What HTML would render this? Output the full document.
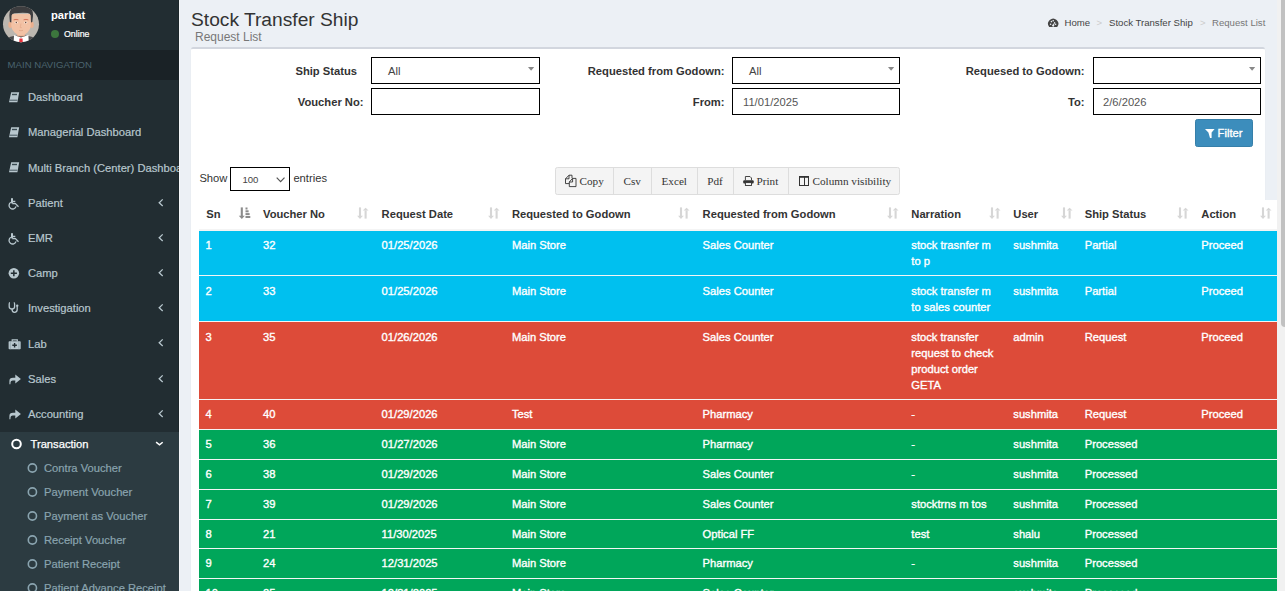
<!DOCTYPE html><html><head><meta charset="utf-8"><title>Stock Transfer Ship</title>
<style>
html,body{margin:0;padding:0}
body{width:1285px;height:591px;overflow:hidden;position:relative;background:#ecf0f5;font-family:"Liberation Sans",sans-serif;}
.t{position:absolute;white-space:nowrap;}
.r{position:absolute;}
svg{position:absolute;overflow:visible}
</style></head><body>
<div class="r" style="left:0px;top:0px;width:179px;height:591px;background:#222d32;"></div>
<div class="r" style="left:178px;top:0px;width:1px;height:591px;background:#1d272b;"></div>
<div class="r" style="left:179px;top:0px;width:1px;height:591px;background:#f4f6f9;"></div>
<svg style="left:0;top:0" width="44" height="48" viewBox="0 0 44 48">
<defs><clipPath id="av"><circle cx="21" cy="24.2" r="18"/></clipPath></defs>
<circle cx="21" cy="24.2" r="18" fill="#bcb7b0"/>
<g clip-path="url(#av)">
<path d="M5 48 L7.5 38 Q13 35.2 21 35.2 Q29 35.2 34.5 38 L37 48 Z" fill="#4a4a4c"/>
<path d="M14 35 L21 37.5 L28.4 35 L28.8 43 L13.6 43 Z" fill="#ffffff"/>
<path d="M19.5 38.6 L22.5 38.6 L22.8 43 L19.2 43 Z" fill="#e8323c"/>
<rect x="17.2" y="30" width="7.6" height="6.4" fill="#e9ae90"/>
<ellipse cx="10.3" cy="24.8" rx="2" ry="3.3" fill="#eab08f"/>
<ellipse cx="31.7" cy="24.8" rx="2" ry="3.3" fill="#eab08f"/>
<path d="M11.3 14 L30.7 14 L30.7 26 Q30.7 29.5 27.5 32.5 Q24.5 35.6 21 35.6 Q17.5 35.6 14.5 32.5 Q11.3 29.5 11.3 26 Z" fill="#f2c2a5"/>
<path d="M9.9 22 L9.4 16 Q9 8.5 15 6.5 Q21 4.5 27.5 6.3 Q33.5 8.5 33 16 L32.3 22 L31 22.5 L30.8 15.5 Q30 13.2 27.8 13 Q22 12.6 14.4 13.2 Q12 13.4 11.5 15.5 L11.3 22.5 Z" fill="#3d3d3f"/>
<path d="M13.6 19.9 Q16 18.9 18.4 19.8" stroke="#d8745a" stroke-width="1" fill="none"/>
<path d="M23.6 19.8 Q26 18.9 28.4 19.9" stroke="#d8745a" stroke-width="1" fill="none"/>
<ellipse cx="16.2" cy="22.5" rx="1.6" ry="0.85" fill="#fff"/><circle cx="16.3" cy="22.5" r="0.8" fill="#6a4a3a"/>
<ellipse cx="25.8" cy="22.5" rx="1.6" ry="0.85" fill="#fff"/><circle cx="25.7" cy="22.5" r="0.8" fill="#6a4a3a"/>
<path d="M21 23.5 L20.2 27.6 L21.8 27.6" stroke="#e2a486" stroke-width="0.6" fill="none"/>
<path d="M19 30.4 Q21 31 23 30.4" stroke="#d99a7e" stroke-width="0.6" fill="none"/>
</g></svg>
<div class="t" style="left:51px;top:8.00px;font-size:11.2px;line-height:14px;color:#fff;font-weight:bold;">parbat</div>
<div class="r" style="left:50.8px;top:29.8px;width:8.3px;height:8.3px;border-radius:50%;background:#3c763d"></div>
<div class="t" style="left:64px;top:28.50px;font-size:8.8px;line-height:11px;color:#fff;-webkit-text-stroke:0.2px #fff">Online</div>
<div class="r" style="left:0px;top:50px;width:179px;height:30px;background:#1a2226;"></div>
<div class="t" style="left:7.6px;top:58.60px;font-size:9.6px;line-height:12px;color:#4b646f;">MAIN NAVIGATION</div>
<div style="position:absolute;left:0;top:0;width:179px;height:591px;overflow:hidden">
<svg style="left:0;top:91.9px" width="30" height="20" viewBox="0 0 30 20"><path d="M11.2 0.2 L19.2 0.2 L17.4 10.2 L9 10.2 Z" fill="#b8c7ce"/><rect x="12" y="1.8" width="5" height="1.4" fill="#3a4a52"/><path d="M9.6 8.2 L17.4 8.2" stroke="#3a4a52" stroke-width="0.9"/></svg>
<div class="t" style="left:28px;top:90.10px;font-size:11.2px;line-height:14px;color:#b8c7ce;-webkit-text-stroke:0.2px #b8c7ce">Dashboard</div>
<svg style="left:0;top:127.10000000000001px" width="30" height="20" viewBox="0 0 30 20"><path d="M11.2 0.2 L19.2 0.2 L17.4 10.2 L9 10.2 Z" fill="#b8c7ce"/><rect x="12" y="1.8" width="5" height="1.4" fill="#3a4a52"/><path d="M9.6 8.2 L17.4 8.2" stroke="#3a4a52" stroke-width="0.9"/></svg>
<div class="t" style="left:28px;top:125.30px;font-size:11.2px;line-height:14px;color:#b8c7ce;-webkit-text-stroke:0.2px #b8c7ce">Managerial Dashboard</div>
<svg style="left:0;top:162.3px" width="30" height="20" viewBox="0 0 30 20"><path d="M11.2 0.2 L19.2 0.2 L17.4 10.2 L9 10.2 Z" fill="#b8c7ce"/><rect x="12" y="1.8" width="5" height="1.4" fill="#3a4a52"/><path d="M9.6 8.2 L17.4 8.2" stroke="#3a4a52" stroke-width="0.9"/></svg>
<div class="t" style="left:28px;top:160.50px;font-size:11.2px;line-height:14px;color:#b8c7ce;-webkit-text-stroke:0.2px #b8c7ce">Multi Branch (Center) Dashboard</div>
<svg style="left:0;top:197.70000000000002px" width="30" height="20" viewBox="0 0 30 20"><rect x="11" y="0" width="2" height="5.5" rx="0.8" fill="#b8c7ce"/><path d="M12 3.5 L15.3 3.5 M12.3 5.6 L15.4 5.6 L18.5 8.8" stroke="#b8c7ce" stroke-width="1.3" fill="none"/><path d="M10.8 4.3 A3.6 3.6 0 1 0 16.1 8.4" stroke="#b8c7ce" stroke-width="1.3" fill="none"/></svg>
<div class="t" style="left:28px;top:195.70px;font-size:11.2px;line-height:14px;color:#b8c7ce;-webkit-text-stroke:0.2px #b8c7ce">Patient</div>
<svg style="left:0;top:198.50000000000003px" width="179" height="20" viewBox="0 0 179 20"><path d="M162.7 0.4 L159.2 3.7 L162.7 6.9" stroke="#b8c7ce" stroke-width="1.3" fill="none"/></svg>
<svg style="left:0;top:232.9px" width="30" height="20" viewBox="0 0 30 20"><rect x="11" y="0" width="2" height="5.5" rx="0.8" fill="#b8c7ce"/><path d="M12 3.5 L15.3 3.5 M12.3 5.6 L15.4 5.6 L18.5 8.8" stroke="#b8c7ce" stroke-width="1.3" fill="none"/><path d="M10.8 4.3 A3.6 3.6 0 1 0 16.1 8.4" stroke="#b8c7ce" stroke-width="1.3" fill="none"/></svg>
<div class="t" style="left:28px;top:230.90px;font-size:11.2px;line-height:14px;color:#b8c7ce;-webkit-text-stroke:0.2px #b8c7ce">EMR</div>
<svg style="left:0;top:233.70000000000002px" width="179" height="20" viewBox="0 0 179 20"><path d="M162.7 0.4 L159.2 3.7 L162.7 6.9" stroke="#b8c7ce" stroke-width="1.3" fill="none"/></svg>
<svg style="left:0;top:267.7px" width="30" height="20" viewBox="0 0 30 20"><circle cx="13.85" cy="5.25" r="5.25" fill="#b8c7ce"/><path d="M13.85 2.2 V8.3 M10.8 5.25 H16.9" stroke="#222d32" stroke-width="1.5"/></svg>
<div class="t" style="left:28px;top:266.10px;font-size:11.2px;line-height:14px;color:#b8c7ce;-webkit-text-stroke:0.2px #b8c7ce">Camp</div>
<svg style="left:0;top:268.9px" width="179" height="20" viewBox="0 0 179 20"><path d="M162.7 0.4 L159.2 3.7 L162.7 6.9" stroke="#b8c7ce" stroke-width="1.3" fill="none"/></svg>
<svg style="left:0;top:302.30000000000007px" width="30" height="20" viewBox="0 0 30 20"><path d="M10 0.6 Q9.2 0.6 9.2 2 L9.2 4.5 Q9.2 7 12 7 Q14.6 7 14.6 4.5 L14.6 2 Q14.6 0.6 13.8 0.6" stroke="#b8c7ce" stroke-width="1.3" fill="none"/><path d="M12 7 Q12 10.3 14.5 10.3 Q17.2 10.3 17.2 7.5 L17.2 4.5" stroke="#b8c7ce" stroke-width="1.3" fill="none"/><circle cx="17.2" cy="3.8" r="1.2" fill="#b8c7ce"/></svg>
<div class="t" style="left:28px;top:301.30px;font-size:11.2px;line-height:14px;color:#b8c7ce;-webkit-text-stroke:0.2px #b8c7ce">Investigation</div>
<svg style="left:0;top:304.1px" width="179" height="20" viewBox="0 0 179 20"><path d="M162.7 0.4 L159.2 3.7 L162.7 6.9" stroke="#b8c7ce" stroke-width="1.3" fill="none"/></svg>
<svg style="left:0;top:338.70000000000005px" width="30" height="20" viewBox="0 0 30 20"><path d="M12.2 2.6 V0.8 H17.3 V2.6" stroke="#b8c7ce" stroke-width="1.2" fill="none"/><rect x="8.6" y="2.3" width="12.1" height="8" rx="0.8" fill="#b8c7ce"/><path d="M14.6 4 V8.6 M12.3 6.3 H16.9" stroke="#222d32" stroke-width="1.4"/><path d="M10.4 2.3 V10.3 M18.9 2.3 V10.3" stroke="#8a9aa2" stroke-width="0.6"/></svg>
<div class="t" style="left:28px;top:336.50px;font-size:11.2px;line-height:14px;color:#b8c7ce;-webkit-text-stroke:0.2px #b8c7ce">Lab</div>
<svg style="left:0;top:339.3px" width="179" height="20" viewBox="0 0 179 20"><path d="M162.7 0.4 L159.2 3.7 L162.7 6.9" stroke="#b8c7ce" stroke-width="1.3" fill="none"/></svg>
<svg style="left:0;top:373.70000000000005px" width="30" height="20" viewBox="0 0 30 20"><path d="M9.4 10.3 L9.4 7 Q9.4 3.7 13 3.7 L15.3 3.7 L15.3 0.6 L20.9 5.1 L15.3 9.6 L15.3 6.4 L12.8 6.4 Q10.7 6.4 10.6 8 L10.4 10.3 Z" fill="#b8c7ce"/></svg>
<div class="t" style="left:28px;top:371.70px;font-size:11.2px;line-height:14px;color:#b8c7ce;-webkit-text-stroke:0.2px #b8c7ce">Sales</div>
<svg style="left:0;top:374.5px" width="179" height="20" viewBox="0 0 179 20"><path d="M162.7 0.4 L159.2 3.7 L162.7 6.9" stroke="#b8c7ce" stroke-width="1.3" fill="none"/></svg>
<svg style="left:0;top:408.90000000000003px" width="30" height="20" viewBox="0 0 30 20"><path d="M9.4 10.3 L9.4 7 Q9.4 3.7 13 3.7 L15.3 3.7 L15.3 0.6 L20.9 5.1 L15.3 9.6 L15.3 6.4 L12.8 6.4 Q10.7 6.4 10.6 8 L10.4 10.3 Z" fill="#b8c7ce"/></svg>
<div class="t" style="left:28px;top:406.90px;font-size:11.2px;line-height:14px;color:#b8c7ce;-webkit-text-stroke:0.2px #b8c7ce">Accounting</div>
<svg style="left:0;top:409.7px" width="179" height="20" viewBox="0 0 179 20"><path d="M162.7 0.4 L159.2 3.7 L162.7 6.9" stroke="#b8c7ce" stroke-width="1.3" fill="none"/></svg>
</div>
<div class="r" style="left:0px;top:432px;width:179px;height:159px;background:#2c3b41;"></div>
<svg style="left:0;top:432px" width="179" height="30" viewBox="0 0 179 30"><circle cx="16.5" cy="12" r="4.3" stroke="#fff" stroke-width="2" fill="none"/><path d="M156.1 10.2 L159.5 12.9 L162.7 10.2" stroke="#fff" stroke-width="1.5" fill="none"/></svg>
<div class="t" style="left:30.5px;top:436.80px;font-size:11.2px;line-height:14px;color:#fff;-webkit-text-stroke:0.25px #fff">Transaction</div>
<svg style="left:0;top:456px" width="60" height="24" viewBox="0 0 60 24"><circle cx="32.4" cy="12" r="4.1" stroke="#8aa4af" stroke-width="1.6" fill="none"/></svg>
<div class="t" style="left:44px;top:460.80px;font-size:11.2px;line-height:14px;color:#8aa4af;-webkit-text-stroke:0.2px #8aa4af">Contra Voucher</div>
<svg style="left:0;top:480px" width="60" height="24" viewBox="0 0 60 24"><circle cx="32.4" cy="12" r="4.1" stroke="#8aa4af" stroke-width="1.6" fill="none"/></svg>
<div class="t" style="left:44px;top:484.80px;font-size:11.2px;line-height:14px;color:#8aa4af;-webkit-text-stroke:0.2px #8aa4af">Payment Voucher</div>
<svg style="left:0;top:504px" width="60" height="24" viewBox="0 0 60 24"><circle cx="32.4" cy="12" r="4.1" stroke="#8aa4af" stroke-width="1.6" fill="none"/></svg>
<div class="t" style="left:44px;top:508.80px;font-size:11.2px;line-height:14px;color:#8aa4af;-webkit-text-stroke:0.2px #8aa4af">Payment as Voucher</div>
<svg style="left:0;top:528px" width="60" height="24" viewBox="0 0 60 24"><circle cx="32.4" cy="12" r="4.1" stroke="#8aa4af" stroke-width="1.6" fill="none"/></svg>
<div class="t" style="left:44px;top:532.80px;font-size:11.2px;line-height:14px;color:#8aa4af;-webkit-text-stroke:0.2px #8aa4af">Receipt Voucher</div>
<svg style="left:0;top:552px" width="60" height="24" viewBox="0 0 60 24"><circle cx="32.4" cy="12" r="4.1" stroke="#8aa4af" stroke-width="1.6" fill="none"/></svg>
<div class="t" style="left:44px;top:556.80px;font-size:11.2px;line-height:14px;color:#8aa4af;-webkit-text-stroke:0.2px #8aa4af">Patient Receipt</div>
<svg style="left:0;top:576px" width="60" height="24" viewBox="0 0 60 24"><circle cx="32.4" cy="12" r="4.1" stroke="#8aa4af" stroke-width="1.6" fill="none"/></svg>
<div class="t" style="left:44px;top:580.80px;font-size:11.2px;line-height:14px;color:#8aa4af;-webkit-text-stroke:0.2px #8aa4af">Patient Advance Receipt</div>
<div class="t" style="left:191px;top:8.30px;font-size:19.2px;line-height:24px;color:#333;">Stock Transfer Ship</div>
<div class="t" style="left:195px;top:29.50px;font-size:12px;line-height:15px;color:#777;">Request List</div>
<svg style="left:1047.6px;top:18.8px" width="11" height="9" viewBox="0 0 11 9"><path d="M1.2 7.9 A5.1 5.1 0 1 1 9.2 7.9 Z" fill="#444"/><circle cx="2.6" cy="5.2" r="0.8" fill="#ecf0f5"/><circle cx="3.4" cy="2.6" r="0.8" fill="#ecf0f5"/><circle cx="5.2" cy="1.7" r="0.8" fill="#ecf0f5"/><circle cx="7.6" cy="5.2" r="0.8" fill="#ecf0f5"/><path d="M5.2 6.6 L6.9 3" stroke="#ecf0f5" stroke-width="1"/><circle cx="5.2" cy="6.6" r="1.1" fill="#ecf0f5"/></svg>
<div class="t" style="left:1064.5px;top:16.50px;font-size:9.6px;line-height:12px;color:#444;">Home</div>
<div class="t" style="left:1096.5px;top:16.50px;font-size:9.6px;line-height:12px;color:#ccc;">&gt;</div>
<div class="t" style="left:1109px;top:16.50px;font-size:9.6px;line-height:12px;color:#444;">Stock Transfer Ship</div>
<div class="t" style="left:1200px;top:16.50px;font-size:9.6px;line-height:12px;color:#ccc;">&gt;</div>
<div class="t" style="left:1212px;top:16.50px;font-size:9.6px;line-height:12px;color:#777;">Request List</div>
<div class="r" style="left:191px;top:47px;width:1074px;height:560px;background:#fff;border-top:2.4px solid #d2d6de;box-sizing:border-box;box-shadow:0 1px 1px rgba(0,0,0,.1);border-radius:2.4px"></div>
<div class="t" style="right:928px;top:64.00px;font-size:11.2px;line-height:14px;color:#333;text-align:right;font-weight:bold;">Ship Status</div>
<div class="r" style="left:371px;top:57px;width:169px;height:27px;background:#fff;border:1px solid #000;box-sizing:border-box"></div>
<svg style="left:527.9px;top:67px" width="8" height="5" viewBox="0 0 8 5"><path d="M0 0 L6.2 0 L3.1 3.7 Z" fill="#888"/></svg>
<div class="t" style="left:388px;top:63.90px;font-size:11.2px;line-height:14px;color:#444;">All</div>
<div class="t" style="right:560.5px;top:64.00px;font-size:11.2px;line-height:14px;color:#333;text-align:right;font-weight:bold;">Requested from Godown:</div>
<div class="r" style="left:732px;top:57px;width:168px;height:27px;background:#fff;border:1px solid #000;box-sizing:border-box"></div>
<svg style="left:888.2px;top:67px" width="8" height="5" viewBox="0 0 8 5"><path d="M0 0 L6.2 0 L3.1 3.7 Z" fill="#888"/></svg>
<div class="t" style="left:749px;top:63.90px;font-size:11.2px;line-height:14px;color:#444;">All</div>
<div class="t" style="right:200.5px;top:64.00px;font-size:11.2px;line-height:14px;color:#333;text-align:right;font-weight:bold;">Requesed to Godown:</div>
<div class="r" style="left:1093px;top:57px;width:168px;height:27px;background:#fff;border:1px solid #000;box-sizing:border-box"></div>
<svg style="left:1249.1px;top:67px" width="8" height="5" viewBox="0 0 8 5"><path d="M0 0 L6.2 0 L3.1 3.7 Z" fill="#888"/></svg>
<div class="t" style="right:921.5px;top:95.20px;font-size:11.2px;line-height:14px;color:#333;text-align:right;font-weight:bold;">Voucher No:</div>
<div class="r" style="left:371px;top:88px;width:169px;height:27px;background:#fff;border:1px solid #000;box-sizing:border-box"></div>
<div class="t" style="right:560.5px;top:95.20px;font-size:11.2px;line-height:14px;color:#333;text-align:right;font-weight:bold;">From:</div>
<div class="r" style="left:732px;top:88px;width:168px;height:27px;background:#fff;border:1px solid #000;box-sizing:border-box"></div>
<div class="t" style="left:743px;top:95.20px;font-size:11.2px;line-height:14px;color:#555;">11/01/2025</div>
<div class="t" style="right:200.5px;top:95.20px;font-size:11.2px;line-height:14px;color:#333;text-align:right;font-weight:bold;">To:</div>
<div class="r" style="left:1093px;top:88px;width:168px;height:27px;background:#fff;border:1px solid #000;box-sizing:border-box"></div>
<div class="t" style="left:1103px;top:95.20px;font-size:11.2px;line-height:14px;color:#555;">2/6/2026</div>
<div class="r" style="left:1195px;top:119px;width:58px;height:27.8px;background:#3c8dbc;border:1px solid #367fa9;box-sizing:border-box;border-radius:2.4px"></div>
<svg style="left:1205px;top:128.8px" width="10" height="10" viewBox="0 0 10 10"><path d="M0 0.1 L9.6 0.1 L6.6 3.6 L6.6 9 L5 9 L3.4 3.6 Z" fill="#fff"/></svg>
<div class="t" style="left:1217.6px;top:126.30px;font-size:11.2px;line-height:14px;color:#fff;-webkit-text-stroke:0.35px #fff">Filter</div>
<div class="t" style="left:199.4px;top:170.80px;font-size:11.2px;line-height:14px;color:#333;">Show</div>
<div class="r" style="left:230px;top:167px;width:60px;height:24px;background:#fff;border:1px solid #000;box-sizing:border-box"></div>
<div class="t" style="left:242.4px;top:174.00px;font-size:9.6px;line-height:12px;color:#444;">100</div>
<svg style="left:276px;top:176.5px" width="10" height="6" viewBox="0 0 10 6"><path d="M0.7 0.6 L4.6 4.6 L8.5 0.6" stroke="#555" stroke-width="1.2" fill="none"/></svg>
<div class="t" style="left:293.4px;top:170.80px;font-size:11.2px;line-height:14px;color:#333;">entries</div>
<div class="r" style="left:555.3px;top:167.4px;width:345.2px;height:27.4px;background:#f4f4f4;border:1px solid #ddd;box-sizing:border-box;border-radius:2.4px"></div>
<div class="r" style="left:613px;top:168px;width:1px;height:26px;background:#ddd;"></div>
<div class="r" style="left:651px;top:168px;width:1px;height:26px;background:#ddd;"></div>
<div class="r" style="left:697px;top:168px;width:1px;height:26px;background:#ddd;"></div>
<div class="r" style="left:733px;top:168px;width:1px;height:26px;background:#ddd;"></div>
<div class="r" style="left:788px;top:168px;width:1px;height:26px;background:#ddd;"></div>
<svg style="left:565px;top:174px" width="12" height="14" viewBox="0 0 12 14"><path d="M7 4.3 L7 1.2 L4 1.2 L0.5 4.8 L0.5 9.6 L4.3 9.6 M0.5 4.8 L4 4.8 L4 1.2" stroke="#333" stroke-width="0.9" fill="none"/><path d="M4.3 8 L7.6 4.4 L11 4.4 L11 12.6 L4.3 12.6 Z" stroke="#333" stroke-width="0.9" fill="#f4f4f4"/><path d="M4.3 8 L7.6 8 L7.6 4.4" stroke="#333" stroke-width="0.9" fill="none"/></svg>
<div class="t" style="left:579.5px;top:174.20px;font-size:11.2px;line-height:14px;color:#333;font-family:'Liberation Serif',serif;">Copy</div>
<div class="t" style="left:623.5px;top:174.20px;font-size:11.2px;line-height:14px;color:#333;font-family:'Liberation Serif',serif;">Csv</div>
<div class="t" style="left:661.5px;top:174.20px;font-size:11.2px;line-height:14px;color:#333;font-family:'Liberation Serif',serif;">Excel</div>
<div class="t" style="left:707.3px;top:174.20px;font-size:11.2px;line-height:14px;color:#333;font-family:'Liberation Serif',serif;">Pdf</div>
<svg style="left:743px;top:176px" width="11" height="10" viewBox="0 0 11 10"><path d="M2.4 4.3 V0.5 H7 L8.5 2 V4.3" fill="#f4f4f4" stroke="#333" stroke-width="0.9"/><rect x="0.2" y="4.2" width="10.5" height="3.2" rx="1" fill="#333"/><rect x="2.4" y="6.6" width="6.1" height="2.9" fill="#f4f4f4" stroke="#333" stroke-width="0.9"/></svg>
<div class="t" style="left:756.5px;top:174.20px;font-size:11.2px;line-height:14px;color:#333;font-family:'Liberation Serif',serif;">Print</div>
<svg style="left:799px;top:176px" width="11" height="10" viewBox="0 0 11 10"><rect x="0.5" y="0.5" width="9" height="9" fill="none" stroke="#333" stroke-width="1"/><rect x="0" y="0" width="10" height="1.8" fill="#333"/><path d="M5.5 0.6 V9.4" stroke="#333" stroke-width="1"/></svg>
<div class="t" style="left:812.5px;top:174.20px;font-size:11.2px;line-height:14px;color:#333;font-family:'Liberation Serif',serif;">Column visibility</div>
<div class="r" style="left:199px;top:200px;width:1078px;height:31px;background:#fff;"></div>
<div class="r" style="left:199px;top:229px;width:1078px;height:1.6px;background:#f4f4f4;"></div>
<div class="t" style="left:206.20000000000002px;top:207.40px;font-size:11.2px;line-height:14px;color:#333;font-weight:bold;">Sn</div>
<svg style="left:238.8px;top:206px" width="13" height="14" viewBox="0 0 13 14"><path d="M2.8 1.4 L2.8 10.5" stroke="#8c8c8c" stroke-width="2.1"/><path d="M-0.2 9.8 L5.8 9.8 L2.8 12.9 Z" fill="#8c8c8c"/><rect x="6.5" y="1.5" width="2" height="2" fill="#8c8c8c"/><rect x="6.5" y="4.3" width="3.1" height="2" fill="#8c8c8c"/><rect x="6.5" y="7.1" width="4.1" height="2" fill="#8c8c8c"/><rect x="6.5" y="10" width="4.8" height="2" fill="#8c8c8c"/></svg>
<div class="t" style="left:263.0px;top:207.40px;font-size:11.2px;line-height:14px;color:#333;font-weight:bold;">Voucher No</div>
<svg style="left:357.4px;top:206px" width="13" height="14" viewBox="0 0 13 14"><path d="M3 1.4 L3 10.5" stroke="#d6d6d6" stroke-width="2.1"/><path d="M0.1 9.8 L5.9 9.8 L3 12.9 Z" fill="#d6d6d6"/><path d="M8.6 4.4 L8.6 12.6" stroke="#d6d6d6" stroke-width="2.1"/><path d="M5.7 4.6 L11.5 4.6 L8.6 1.7 Z" fill="#d6d6d6"/></svg>
<div class="t" style="left:381.59999999999997px;top:207.40px;font-size:11.2px;line-height:14px;color:#333;font-weight:bold;">Request Date</div>
<svg style="left:487.7px;top:206px" width="13" height="14" viewBox="0 0 13 14"><path d="M3 1.4 L3 10.5" stroke="#d6d6d6" stroke-width="2.1"/><path d="M0.1 9.8 L5.9 9.8 L3 12.9 Z" fill="#d6d6d6"/><path d="M8.6 4.4 L8.6 12.6" stroke="#d6d6d6" stroke-width="2.1"/><path d="M5.7 4.6 L11.5 4.6 L8.6 1.7 Z" fill="#d6d6d6"/></svg>
<div class="t" style="left:511.9px;top:207.40px;font-size:11.2px;line-height:14px;color:#333;font-weight:bold;">Requested to Godown</div>
<svg style="left:678.4000000000001px;top:206px" width="13" height="14" viewBox="0 0 13 14"><path d="M3 1.4 L3 10.5" stroke="#d6d6d6" stroke-width="2.1"/><path d="M0.1 9.8 L5.9 9.8 L3 12.9 Z" fill="#d6d6d6"/><path d="M8.6 4.4 L8.6 12.6" stroke="#d6d6d6" stroke-width="2.1"/><path d="M5.7 4.6 L11.5 4.6 L8.6 1.7 Z" fill="#d6d6d6"/></svg>
<div class="t" style="left:702.6px;top:207.40px;font-size:11.2px;line-height:14px;color:#333;font-weight:bold;">Requested from Godown</div>
<svg style="left:887.1px;top:206px" width="13" height="14" viewBox="0 0 13 14"><path d="M3 1.4 L3 10.5" stroke="#d6d6d6" stroke-width="2.1"/><path d="M0.1 9.8 L5.9 9.8 L3 12.9 Z" fill="#d6d6d6"/><path d="M8.6 4.4 L8.6 12.6" stroke="#d6d6d6" stroke-width="2.1"/><path d="M5.7 4.6 L11.5 4.6 L8.6 1.7 Z" fill="#d6d6d6"/></svg>
<div class="t" style="left:911.3px;top:207.40px;font-size:11.2px;line-height:14px;color:#333;font-weight:bold;">Narration</div>
<svg style="left:989.1px;top:206px" width="13" height="14" viewBox="0 0 13 14"><path d="M3 1.4 L3 10.5" stroke="#d6d6d6" stroke-width="2.1"/><path d="M0.1 9.8 L5.9 9.8 L3 12.9 Z" fill="#d6d6d6"/><path d="M8.6 4.4 L8.6 12.6" stroke="#d6d6d6" stroke-width="2.1"/><path d="M5.7 4.6 L11.5 4.6 L8.6 1.7 Z" fill="#d6d6d6"/></svg>
<div class="t" style="left:1013.3px;top:207.40px;font-size:11.2px;line-height:14px;color:#333;font-weight:bold;">User</div>
<svg style="left:1060.5px;top:206px" width="13" height="14" viewBox="0 0 13 14"><path d="M3 1.4 L3 10.5" stroke="#d6d6d6" stroke-width="2.1"/><path d="M0.1 9.8 L5.9 9.8 L3 12.9 Z" fill="#d6d6d6"/><path d="M8.6 4.4 L8.6 12.6" stroke="#d6d6d6" stroke-width="2.1"/><path d="M5.7 4.6 L11.5 4.6 L8.6 1.7 Z" fill="#d6d6d6"/></svg>
<div class="t" style="left:1084.7px;top:207.40px;font-size:11.2px;line-height:14px;color:#333;font-weight:bold;">Ship Status</div>
<svg style="left:1177.1000000000001px;top:206px" width="13" height="14" viewBox="0 0 13 14"><path d="M3 1.4 L3 10.5" stroke="#d6d6d6" stroke-width="2.1"/><path d="M0.1 9.8 L5.9 9.8 L3 12.9 Z" fill="#d6d6d6"/><path d="M8.6 4.4 L8.6 12.6" stroke="#d6d6d6" stroke-width="2.1"/><path d="M5.7 4.6 L11.5 4.6 L8.6 1.7 Z" fill="#d6d6d6"/></svg>
<div class="t" style="left:1201.3000000000002px;top:207.40px;font-size:11.2px;line-height:14px;color:#333;font-weight:bold;">Action</div>
<svg style="left:1260.0px;top:206px" width="13" height="14" viewBox="0 0 13 14"><path d="M3 1.4 L3 10.5" stroke="#d6d6d6" stroke-width="2.1"/><path d="M0.1 9.8 L5.9 9.8 L3 12.9 Z" fill="#d6d6d6"/><path d="M8.6 4.4 L8.6 12.6" stroke="#d6d6d6" stroke-width="2.1"/><path d="M5.7 4.6 L11.5 4.6 L8.6 1.7 Z" fill="#d6d6d6"/></svg>
<div class="r" style="left:199px;top:231px;width:1078px;height:44px;background:#00c0ef;"></div>
<div class="t" style="left:205.60000000000002px;top:238.30px;font-size:11.2px;line-height:14px;color:#fff;-webkit-text-stroke:0.35px #fff">1</div>
<div class="t" style="left:263.0px;top:238.30px;font-size:11.2px;line-height:14px;color:#fff;-webkit-text-stroke:0.35px #fff">32</div>
<div class="t" style="left:381.59999999999997px;top:238.30px;font-size:11.2px;line-height:14px;color:#fff;-webkit-text-stroke:0.35px #fff">01/25/2026</div>
<div class="t" style="left:511.9px;top:238.30px;font-size:11.2px;line-height:14px;color:#fff;-webkit-text-stroke:0.35px #fff">Main Store</div>
<div class="t" style="left:702.6px;top:238.30px;font-size:11.2px;line-height:14px;color:#fff;-webkit-text-stroke:0.35px #fff">Sales Counter</div>
<div class="t" style="left:911.3px;top:238.30px;font-size:11.2px;line-height:14px;color:#fff;-webkit-text-stroke:0.35px #fff">stock trasnfer m</div>
<div class="t" style="left:911.3px;top:254.30px;font-size:11.2px;line-height:14px;color:#fff;-webkit-text-stroke:0.35px #fff">to p</div>
<div class="t" style="left:1013.3px;top:238.30px;font-size:11.2px;line-height:14px;color:#fff;-webkit-text-stroke:0.35px #fff">sushmita</div>
<div class="t" style="left:1084.7px;top:238.30px;font-size:11.2px;line-height:14px;color:#fff;-webkit-text-stroke:0.35px #fff">Partial</div>
<div class="t" style="left:1201.3000000000002px;top:238.30px;font-size:11.2px;line-height:14px;color:#fff;-webkit-text-stroke:0.35px #fff">Proceed</div>
<div class="r" style="left:199px;top:275px;width:1078px;height:1px;background:#f4f4f4;"></div>
<div class="r" style="left:199px;top:276px;width:1078px;height:45px;background:#00c0ef;"></div>
<div class="t" style="left:205.60000000000002px;top:284.30px;font-size:11.2px;line-height:14px;color:#fff;-webkit-text-stroke:0.35px #fff">2</div>
<div class="t" style="left:263.0px;top:284.30px;font-size:11.2px;line-height:14px;color:#fff;-webkit-text-stroke:0.35px #fff">33</div>
<div class="t" style="left:381.59999999999997px;top:284.30px;font-size:11.2px;line-height:14px;color:#fff;-webkit-text-stroke:0.35px #fff">01/25/2026</div>
<div class="t" style="left:511.9px;top:284.30px;font-size:11.2px;line-height:14px;color:#fff;-webkit-text-stroke:0.35px #fff">Main Store</div>
<div class="t" style="left:702.6px;top:284.30px;font-size:11.2px;line-height:14px;color:#fff;-webkit-text-stroke:0.35px #fff">Sales Counter</div>
<div class="t" style="left:911.3px;top:284.30px;font-size:11.2px;line-height:14px;color:#fff;-webkit-text-stroke:0.35px #fff">stock transfer m</div>
<div class="t" style="left:911.3px;top:300.30px;font-size:11.2px;line-height:14px;color:#fff;-webkit-text-stroke:0.35px #fff">to sales counter</div>
<div class="t" style="left:1013.3px;top:284.30px;font-size:11.2px;line-height:14px;color:#fff;-webkit-text-stroke:0.35px #fff">sushmita</div>
<div class="t" style="left:1084.7px;top:284.30px;font-size:11.2px;line-height:14px;color:#fff;-webkit-text-stroke:0.35px #fff">Partial</div>
<div class="t" style="left:1201.3000000000002px;top:284.30px;font-size:11.2px;line-height:14px;color:#fff;-webkit-text-stroke:0.35px #fff">Proceed</div>
<div class="r" style="left:199px;top:321px;width:1078px;height:1px;background:#f4f4f4;"></div>
<div class="r" style="left:199px;top:322px;width:1078px;height:77px;background:#dd4b39;"></div>
<div class="t" style="left:205.60000000000002px;top:330.30px;font-size:11.2px;line-height:14px;color:#fff;-webkit-text-stroke:0.35px #fff">3</div>
<div class="t" style="left:263.0px;top:330.30px;font-size:11.2px;line-height:14px;color:#fff;-webkit-text-stroke:0.35px #fff">35</div>
<div class="t" style="left:381.59999999999997px;top:330.30px;font-size:11.2px;line-height:14px;color:#fff;-webkit-text-stroke:0.35px #fff">01/26/2026</div>
<div class="t" style="left:511.9px;top:330.30px;font-size:11.2px;line-height:14px;color:#fff;-webkit-text-stroke:0.35px #fff">Main Store</div>
<div class="t" style="left:702.6px;top:330.30px;font-size:11.2px;line-height:14px;color:#fff;-webkit-text-stroke:0.35px #fff">Sales Counter</div>
<div class="t" style="left:911.3px;top:330.30px;font-size:11.2px;line-height:14px;color:#fff;-webkit-text-stroke:0.35px #fff">stock transfer</div>
<div class="t" style="left:911.3px;top:346.30px;font-size:11.2px;line-height:14px;color:#fff;-webkit-text-stroke:0.35px #fff">request to check</div>
<div class="t" style="left:911.3px;top:362.30px;font-size:11.2px;line-height:14px;color:#fff;-webkit-text-stroke:0.35px #fff">product order</div>
<div class="t" style="left:911.3px;top:378.30px;font-size:11.2px;line-height:14px;color:#fff;-webkit-text-stroke:0.35px #fff">GETA</div>
<div class="t" style="left:1013.3px;top:330.30px;font-size:11.2px;line-height:14px;color:#fff;-webkit-text-stroke:0.35px #fff">admin</div>
<div class="t" style="left:1084.7px;top:330.30px;font-size:11.2px;line-height:14px;color:#fff;-webkit-text-stroke:0.35px #fff">Request</div>
<div class="t" style="left:1201.3000000000002px;top:330.30px;font-size:11.2px;line-height:14px;color:#fff;-webkit-text-stroke:0.35px #fff">Proceed</div>
<div class="r" style="left:199px;top:399px;width:1078px;height:1px;background:#f4f4f4;"></div>
<div class="r" style="left:199px;top:400px;width:1078px;height:29px;background:#dd4b39;"></div>
<div class="t" style="left:205.60000000000002px;top:407.30px;font-size:11.2px;line-height:14px;color:#fff;-webkit-text-stroke:0.35px #fff">4</div>
<div class="t" style="left:263.0px;top:407.30px;font-size:11.2px;line-height:14px;color:#fff;-webkit-text-stroke:0.35px #fff">40</div>
<div class="t" style="left:381.59999999999997px;top:407.30px;font-size:11.2px;line-height:14px;color:#fff;-webkit-text-stroke:0.35px #fff">01/29/2026</div>
<div class="t" style="left:511.9px;top:407.30px;font-size:11.2px;line-height:14px;color:#fff;-webkit-text-stroke:0.35px #fff">Test</div>
<div class="t" style="left:702.6px;top:407.30px;font-size:11.2px;line-height:14px;color:#fff;-webkit-text-stroke:0.35px #fff">Pharmacy</div>
<div class="t" style="left:911.3px;top:407.30px;font-size:11.2px;line-height:14px;color:#fff;-webkit-text-stroke:0.35px #fff">-</div>
<div class="t" style="left:1013.3px;top:407.30px;font-size:11.2px;line-height:14px;color:#fff;-webkit-text-stroke:0.35px #fff">sushmita</div>
<div class="t" style="left:1084.7px;top:407.30px;font-size:11.2px;line-height:14px;color:#fff;-webkit-text-stroke:0.35px #fff">Request</div>
<div class="t" style="left:1201.3000000000002px;top:407.30px;font-size:11.2px;line-height:14px;color:#fff;-webkit-text-stroke:0.35px #fff">Proceed</div>
<div class="r" style="left:199px;top:429px;width:1078px;height:1px;background:#f4f4f4;"></div>
<div class="r" style="left:199px;top:430px;width:1078px;height:29px;background:#00a65a;"></div>
<div class="t" style="left:205.60000000000002px;top:437.30px;font-size:11.2px;line-height:14px;color:#fff;-webkit-text-stroke:0.35px #fff">5</div>
<div class="t" style="left:263.0px;top:437.30px;font-size:11.2px;line-height:14px;color:#fff;-webkit-text-stroke:0.35px #fff">36</div>
<div class="t" style="left:381.59999999999997px;top:437.30px;font-size:11.2px;line-height:14px;color:#fff;-webkit-text-stroke:0.35px #fff">01/27/2026</div>
<div class="t" style="left:511.9px;top:437.30px;font-size:11.2px;line-height:14px;color:#fff;-webkit-text-stroke:0.35px #fff">Main Store</div>
<div class="t" style="left:702.6px;top:437.30px;font-size:11.2px;line-height:14px;color:#fff;-webkit-text-stroke:0.35px #fff">Pharmacy</div>
<div class="t" style="left:911.3px;top:437.30px;font-size:11.2px;line-height:14px;color:#fff;-webkit-text-stroke:0.35px #fff">-</div>
<div class="t" style="left:1013.3px;top:437.30px;font-size:11.2px;line-height:14px;color:#fff;-webkit-text-stroke:0.35px #fff">sushmita</div>
<div class="t" style="left:1084.7px;top:437.30px;font-size:11.2px;line-height:14px;color:#fff;-webkit-text-stroke:0.35px #fff">Processed</div>
<div class="r" style="left:199px;top:459px;width:1078px;height:1px;background:#f4f4f4;"></div>
<div class="r" style="left:199px;top:460px;width:1078px;height:29px;background:#00a65a;"></div>
<div class="t" style="left:205.60000000000002px;top:467.30px;font-size:11.2px;line-height:14px;color:#fff;-webkit-text-stroke:0.35px #fff">6</div>
<div class="t" style="left:263.0px;top:467.30px;font-size:11.2px;line-height:14px;color:#fff;-webkit-text-stroke:0.35px #fff">38</div>
<div class="t" style="left:381.59999999999997px;top:467.30px;font-size:11.2px;line-height:14px;color:#fff;-webkit-text-stroke:0.35px #fff">01/29/2026</div>
<div class="t" style="left:511.9px;top:467.30px;font-size:11.2px;line-height:14px;color:#fff;-webkit-text-stroke:0.35px #fff">Main Store</div>
<div class="t" style="left:702.6px;top:467.30px;font-size:11.2px;line-height:14px;color:#fff;-webkit-text-stroke:0.35px #fff">Sales Counter</div>
<div class="t" style="left:911.3px;top:467.30px;font-size:11.2px;line-height:14px;color:#fff;-webkit-text-stroke:0.35px #fff">-</div>
<div class="t" style="left:1013.3px;top:467.30px;font-size:11.2px;line-height:14px;color:#fff;-webkit-text-stroke:0.35px #fff">sushmita</div>
<div class="t" style="left:1084.7px;top:467.30px;font-size:11.2px;line-height:14px;color:#fff;-webkit-text-stroke:0.35px #fff">Processed</div>
<div class="r" style="left:199px;top:489px;width:1078px;height:1px;background:#f4f4f4;"></div>
<div class="r" style="left:199px;top:490px;width:1078px;height:29px;background:#00a65a;"></div>
<div class="t" style="left:205.60000000000002px;top:497.30px;font-size:11.2px;line-height:14px;color:#fff;-webkit-text-stroke:0.35px #fff">7</div>
<div class="t" style="left:263.0px;top:497.30px;font-size:11.2px;line-height:14px;color:#fff;-webkit-text-stroke:0.35px #fff">39</div>
<div class="t" style="left:381.59999999999997px;top:497.30px;font-size:11.2px;line-height:14px;color:#fff;-webkit-text-stroke:0.35px #fff">01/29/2026</div>
<div class="t" style="left:511.9px;top:497.30px;font-size:11.2px;line-height:14px;color:#fff;-webkit-text-stroke:0.35px #fff">Main Store</div>
<div class="t" style="left:702.6px;top:497.30px;font-size:11.2px;line-height:14px;color:#fff;-webkit-text-stroke:0.35px #fff">Sales Counter</div>
<div class="t" style="left:911.3px;top:497.30px;font-size:11.2px;line-height:14px;color:#fff;-webkit-text-stroke:0.35px #fff">stocktrns m tos</div>
<div class="t" style="left:1013.3px;top:497.30px;font-size:11.2px;line-height:14px;color:#fff;-webkit-text-stroke:0.35px #fff">sushmita</div>
<div class="t" style="left:1084.7px;top:497.30px;font-size:11.2px;line-height:14px;color:#fff;-webkit-text-stroke:0.35px #fff">Processed</div>
<div class="r" style="left:199px;top:519px;width:1078px;height:1px;background:#f4f4f4;"></div>
<div class="r" style="left:199px;top:520px;width:1078px;height:28px;background:#00a65a;"></div>
<div class="t" style="left:205.60000000000002px;top:527.30px;font-size:11.2px;line-height:14px;color:#fff;-webkit-text-stroke:0.35px #fff">8</div>
<div class="t" style="left:263.0px;top:527.30px;font-size:11.2px;line-height:14px;color:#fff;-webkit-text-stroke:0.35px #fff">21</div>
<div class="t" style="left:381.59999999999997px;top:527.30px;font-size:11.2px;line-height:14px;color:#fff;-webkit-text-stroke:0.35px #fff">11/30/2025</div>
<div class="t" style="left:511.9px;top:527.30px;font-size:11.2px;line-height:14px;color:#fff;-webkit-text-stroke:0.35px #fff">Main Store</div>
<div class="t" style="left:702.6px;top:527.30px;font-size:11.2px;line-height:14px;color:#fff;-webkit-text-stroke:0.35px #fff">Optical FF</div>
<div class="t" style="left:911.3px;top:527.30px;font-size:11.2px;line-height:14px;color:#fff;-webkit-text-stroke:0.35px #fff">test</div>
<div class="t" style="left:1013.3px;top:527.30px;font-size:11.2px;line-height:14px;color:#fff;-webkit-text-stroke:0.35px #fff">shalu</div>
<div class="t" style="left:1084.7px;top:527.30px;font-size:11.2px;line-height:14px;color:#fff;-webkit-text-stroke:0.35px #fff">Processed</div>
<div class="r" style="left:199px;top:548px;width:1078px;height:1px;background:#f4f4f4;"></div>
<div class="r" style="left:199px;top:549px;width:1078px;height:29px;background:#00a65a;"></div>
<div class="t" style="left:205.60000000000002px;top:556.30px;font-size:11.2px;line-height:14px;color:#fff;-webkit-text-stroke:0.35px #fff">9</div>
<div class="t" style="left:263.0px;top:556.30px;font-size:11.2px;line-height:14px;color:#fff;-webkit-text-stroke:0.35px #fff">24</div>
<div class="t" style="left:381.59999999999997px;top:556.30px;font-size:11.2px;line-height:14px;color:#fff;-webkit-text-stroke:0.35px #fff">12/31/2025</div>
<div class="t" style="left:511.9px;top:556.30px;font-size:11.2px;line-height:14px;color:#fff;-webkit-text-stroke:0.35px #fff">Main Store</div>
<div class="t" style="left:702.6px;top:556.30px;font-size:11.2px;line-height:14px;color:#fff;-webkit-text-stroke:0.35px #fff">Pharmacy</div>
<div class="t" style="left:911.3px;top:556.30px;font-size:11.2px;line-height:14px;color:#fff;-webkit-text-stroke:0.35px #fff">-</div>
<div class="t" style="left:1013.3px;top:556.30px;font-size:11.2px;line-height:14px;color:#fff;-webkit-text-stroke:0.35px #fff">sushmita</div>
<div class="t" style="left:1084.7px;top:556.30px;font-size:11.2px;line-height:14px;color:#fff;-webkit-text-stroke:0.35px #fff">Processed</div>
<div class="r" style="left:199px;top:578px;width:1078px;height:1px;background:#f4f4f4;"></div>
<div class="r" style="left:199px;top:579px;width:1078px;height:29px;background:#00a65a;"></div>
<div class="t" style="left:205.60000000000002px;top:586.30px;font-size:11.2px;line-height:14px;color:#fff;-webkit-text-stroke:0.35px #fff">10</div>
<div class="t" style="left:263.0px;top:586.30px;font-size:11.2px;line-height:14px;color:#fff;-webkit-text-stroke:0.35px #fff">25</div>
<div class="t" style="left:381.59999999999997px;top:586.30px;font-size:11.2px;line-height:14px;color:#fff;-webkit-text-stroke:0.35px #fff">12/31/2025</div>
<div class="t" style="left:511.9px;top:586.30px;font-size:11.2px;line-height:14px;color:#fff;-webkit-text-stroke:0.35px #fff">Main Store</div>
<div class="t" style="left:702.6px;top:586.30px;font-size:11.2px;line-height:14px;color:#fff;-webkit-text-stroke:0.35px #fff">Sales Counter</div>
<div class="t" style="left:911.3px;top:586.30px;font-size:11.2px;line-height:14px;color:#fff;-webkit-text-stroke:0.35px #fff">-</div>
<div class="t" style="left:1013.3px;top:586.30px;font-size:11.2px;line-height:14px;color:#fff;-webkit-text-stroke:0.35px #fff">sushmita</div>
<div class="t" style="left:1084.7px;top:586.30px;font-size:11.2px;line-height:14px;color:#fff;-webkit-text-stroke:0.35px #fff">Processed</div>
<div class="r" style="left:1277px;top:0px;width:8px;height:591px;background:#f1f1f1;"></div>
<div class="r" style="left:1281px;top:0px;width:8px;height:327px;background:#c1c1c1;border-radius:0 0 0 4px"></div>
</body></html>
